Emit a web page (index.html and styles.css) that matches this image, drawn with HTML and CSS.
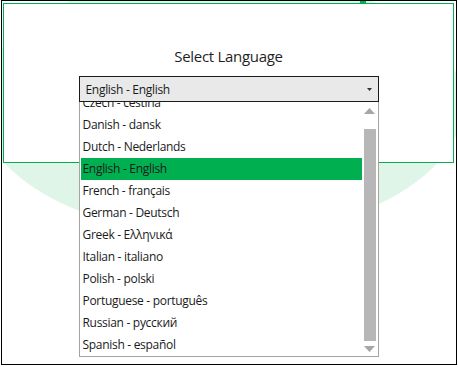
FILE: index.html
```html
<!DOCTYPE html>
<html lang="en">
<head>
    <meta charset="UTF-8" />
    <meta name="viewport" content="width=device-width, initial-scale=1.0" />
    <title>Select Language</title>
    <link rel="stylesheet" href="styles.css">
</head>
<body>
    <div class="frame">
        <div class="glow"></div>
        <span class="pin"></span>
        <div class="panel">
            <h2 class="title">Select Language</h2>
            <div class="select">
                <div class="select-value">
                    <span>English - English</span>
                    <svg class="caret" width="5" height="3" viewBox="0 0 5 3"><path d="M0 0h5L2.5 3z" fill="#333"/></svg>
                </div>
                <div class="dropdown">
                    <ul class="options">
                        <li>Czech - čeština</li>
                        <li>Danish - dansk</li>
                        <li>Dutch - Nederlands</li>
                        <li class="selected">English - English</li>
                        <li>French - français</li>
                        <li>German - Deutsch</li>
                        <li>Greek - Ελληνικά</li>
                        <li>Italian - italiano</li>
                        <li>Polish - polski</li>
                        <li>Portuguese - português</li>
                        <li>Russian - русский</li>
                        <li>Spanish - español</li>
                    </ul>
                    <div class="scrollbar">
                        <svg class="arrow-up" width="11" height="6" viewBox="0 0 11 6"><path d="M5.5 0L11 6H0z" fill="#a6a6a6"/></svg>
                        <div class="thumb"></div>
                        <svg class="arrow-down" width="11" height="6" viewBox="0 0 11 6"><path d="M0 0h11L5.5 6z" fill="#a6a6a6"/></svg>
                    </div>
                </div>
            </div>
        </div>
    </div>
</body>
</html>
```

FILE: styles.css
```css
body {
    margin: 0;
    background: #fff;
    font-family: 'Open Sans', 'Noto Sans', sans-serif;
    color: #1a1a1a;
    overflow: hidden;
}

.frame {
    position: relative;
    margin-left: 1px;
    width: 456px;
    height: 365px;
    box-sizing: border-box;
    border: 1px solid #000;
    overflow: hidden;
}

.glow {
    position: absolute;
    left: -23px;
    top: -29px;
    width: 484px;
    height: 264px;
    border-radius: 50%;
    background: #dff5e8;
}

.pin {
    position: absolute;
    left: 358px;
    top: 0;
    width: 6px;
    height: 2px;
    background: #00b050;
}

.panel {
    position: relative;
    z-index: 1;
    margin: 2px 2px 0 1px;
    height: 160px;
    box-sizing: border-box;
    border: 1px solid #00b050;
    background: #fff;
    display: flex;
    flex-direction: column;
    align-items: center;
    padding-top: 41px;
}

.title {
    margin: 0;
    font-size: 15px;
    font-weight: 400;
    line-height: 22px;
    letter-spacing: -0.3px;
    color: #1f1f1f;
}

.select {
    position: relative;
    width: 300px;
    margin-top: 9px;
    font-size: 12px;
    letter-spacing: -0.3px;
}

.select-value {
    height: 26px;
    box-sizing: border-box;
    border: 1px solid #1a1a1a;
    background: #e9e9e9;
    display: flex;
    align-items: center;
    justify-content: space-between;
    padding: 0 6px 0 6px;
}

.dropdown {
    position: absolute;
    top: 100%;
    left: 0;
    width: 300px;
    height: 255px;
    box-sizing: border-box;
    border: 1px solid #a8a49c;
    border-top: none;
    background: #fff;
    display: flex;
    overflow: hidden;
}

.options {
    flex: 1;
    list-style: none;
    margin: -10px 0 0 1px;
    padding: 0;
}

.options li {
    height: 22px;
    line-height: 22px;
    padding-left: 2px;
    white-space: nowrap;
}

.options .selected {
    background: #00b050;
}

.scrollbar {
    width: 16px;
    display: flex;
    flex-direction: column;
    align-items: center;
}

.arrow-up {
    margin-top: 6px;
}

.thumb {
    width: 12px;
    height: 212px;
    margin: 15px 0 5px 1px;
    background: #b7b7b7;
}
```
